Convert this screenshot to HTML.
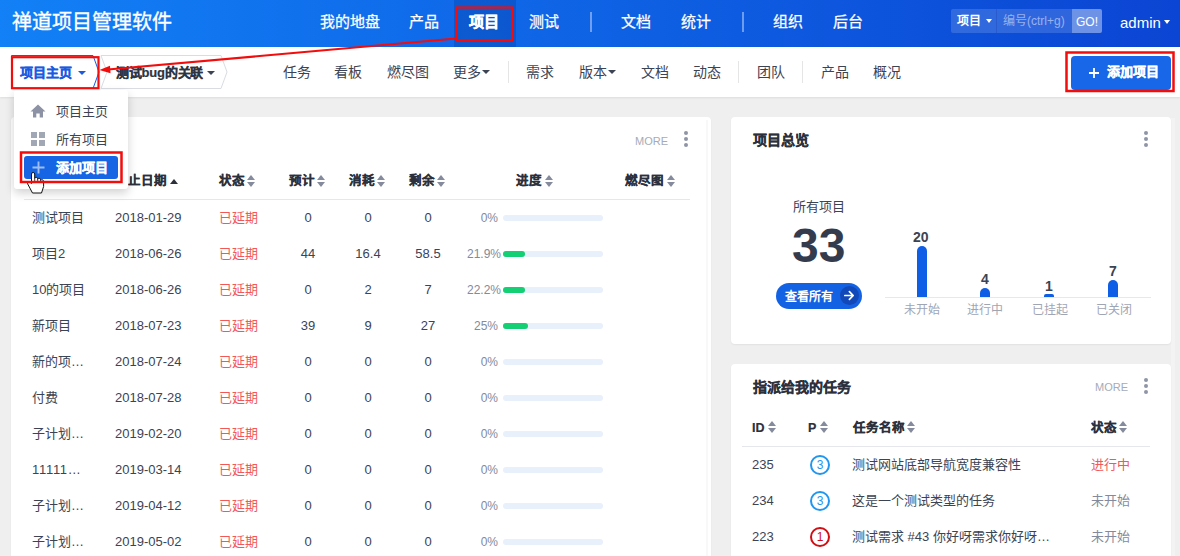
<!DOCTYPE html>
<html lang="zh-CN">
<head>
<meta charset="utf-8">
<style>
*{box-sizing:border-box;margin:0;padding:0}
html,body{width:1180px;height:556px;overflow:hidden}
body{position:relative;background:#efefef;font-family:"Liberation Sans",sans-serif;color:#3c4353;font-size:13px}
.a{position:absolute;white-space:nowrap;line-height:1}
#hd{position:absolute;left:0;top:0;width:1180px;height:47px;background:linear-gradient(to right,#1280f6,#0b45d3)}
#sub{position:absolute;left:0;top:47px;width:1180px;height:50px;background:#fff;box-shadow:0 1px 2px rgba(0,0,0,.08)}
.w{color:#fff}
.card{position:absolute;background:#fff;border-radius:4px;box-shadow:0 1px 2px rgba(0,0,0,.06)}
.b{font-weight:bold}
.nav{font-size:15px;top:14px;color:#fff;-webkit-text-stroke:0.25px #fff}
.nav.b{-webkit-text-stroke:0.5px #fff}
.sn{font-size:14px;color:#3c4353}
.sep{position:absolute;width:1px;background:#e5e5e5}
.th{font-size:12.5px;font-weight:bold;color:#2b303c;-webkit-text-stroke:0.2px #2b303c}
.sort{position:absolute;width:9px;height:12px}
.sort:before{content:"";position:absolute;left:0;top:0;border-left:4.5px solid transparent;border-right:4.5px solid transparent;border-bottom:5px solid #858b9d}
.sort:after{content:"";position:absolute;left:0;top:7px;border-left:4.5px solid transparent;border-right:4.5px solid transparent;border-top:5px solid #858b9d}
.td{font-size:13px;color:#3c4353}
.red{color:#f1585a}
.pbar{position:absolute;left:503px;width:100px;height:6px;border-radius:3px;background:#e8f0fb}
.pfill{position:absolute;left:0;top:0;height:6px;border-radius:3px;background:#14cf74}
.pct{font-size:12px;color:#838a9d}
.dots{position:absolute;width:4px;height:16px}
.dots i{position:absolute;left:0;width:4px;height:4px;border-radius:2px;background:#8f95a6}
.more{font-size:11px;color:#a6abb8}
.bar{position:absolute;width:10px;background:#0f5ee6;border-radius:5px 5px 0 0}
.bl{font-size:14px;font-weight:bold;color:#3c4353}
.cat{font-size:12px;color:#a0a5b4}
.pri{position:absolute;width:20px;height:20px;border-radius:10px;border:2px solid #2196f0;color:#2196f0;font-size:12px;line-height:16px;text-align:center}
</style>
</head>
<body>
<div id="hd">
  <div class="a w" style="left:12px;top:12px;font-size:20px;-webkit-text-stroke:0.35px #fff">禅道项目管理软件</div>
  <div style="position:absolute;left:454px;top:0;width:62px;height:47px;background:rgba(0,20,100,.18)"></div>
  <div class="a nav" style="left:320px">我的地盘</div>
  <div class="a nav" style="left:409px">产品</div>
  <div class="a nav b" style="left:469px">项目</div>
  <div class="a nav" style="left:529px">测试</div>
  <div style="position:absolute;left:589.5px;top:12px;width:2px;height:20px;background:rgba(255,255,255,.4)"></div>
  <div class="a nav" style="left:621px">文档</div>
  <div class="a nav" style="left:681px">统计</div>
  <div style="position:absolute;left:741.5px;top:12px;width:2px;height:20px;background:rgba(255,255,255,.4)"></div>
  <div class="a nav" style="left:773px">组织</div>
  <div class="a nav" style="left:833px">后台</div>
  <!-- search -->
  <div style="position:absolute;left:951px;top:9px;width:151px;height:24px;border-radius:2px;background:rgba(255,255,255,.15)"></div>
  <div style="position:absolute;left:996px;top:9px;width:1px;height:24px;background:rgba(0,0,80,.12)"></div>
  <div style="position:absolute;left:1072px;top:9px;width:30px;height:24px;border-radius:0 2px 2px 0;background:rgba(255,255,255,.3)"></div>
  <div class="a w b" style="left:957px;top:15px;font-size:12px">项目</div>
  <div style="position:absolute;left:986px;top:19px;border-left:3.5px solid transparent;border-right:3.5px solid transparent;border-top:4px solid #fff"></div>
  <div class="a" style="left:1003px;top:15px;font-size:12px;color:rgba(255,255,255,.5)">编号(ctrl+g)</div>
  <div class="a w" style="left:1076px;top:16px;font-size:12px">GO!</div>
  <div class="a w" style="left:1120px;top:15px;font-size:15px">admin</div>
  <div style="position:absolute;left:1164px;top:20px;border-left:3.5px solid transparent;border-right:3.5px solid transparent;border-top:4px solid #fff"></div>
</div>

<div id="sub">
  <!-- breadcrumb -->
  <svg style="position:absolute;left:0;top:0" width="240" height="50">
    <path d="M11.5 8.5 H93 L99 25 L93 41.5 H11.5 Z" fill="#fff" stroke="#1a5be0" stroke-width="1"/>
    <path d="M101 8.5 H221 L227 25 L221 41.5 H101 L107 25 Z" fill="#fff" stroke="#d9dce3" stroke-width="1"/>
  </svg>
  <div class="a b" style="left:20px;top:19px;font-size:13px;color:#1a5be0;-webkit-text-stroke:0.25px #1a5be0">项目主页</div>
  <div style="position:absolute;left:77.5px;top:23.5px;border-left:4px solid transparent;border-right:4px solid transparent;border-top:4.5px solid #1a5be0"></div>
  <div class="a b" style="left:116px;top:19px;font-size:13px;color:#2f3442;letter-spacing:-0.2px;-webkit-text-stroke:0.2px #2f3442">测试bug的关联</div>
  <div style="position:absolute;left:207px;top:23.5px;border-left:4px solid transparent;border-right:4px solid transparent;border-top:4.5px solid #3c4353"></div>

  <div class="a sn" style="left:283px;top:18px">任务</div>
  <div class="a sn" style="left:334px;top:18px">看板</div>
  <div class="a sn" style="left:387px;top:18px">燃尽图</div>
  <div class="a sn" style="left:453px;top:18px">更多</div>
  <div style="position:absolute;left:482px;top:23px;border-left:4px solid transparent;border-right:4px solid transparent;border-top:4.5px solid #3c4353"></div>
  <div class="sep" style="left:508px;top:14px;height:22px"></div>
  <div class="a sn" style="left:526px;top:18px">需求</div>
  <div class="a sn" style="left:579px;top:18px">版本</div>
  <div style="position:absolute;left:608px;top:23px;border-left:4px solid transparent;border-right:4px solid transparent;border-top:4.5px solid #3c4353"></div>
  <div class="a sn" style="left:641px;top:18px">文档</div>
  <div class="a sn" style="left:693px;top:18px">动态</div>
  <div class="sep" style="left:738px;top:14px;height:22px"></div>
  <div class="a sn" style="left:757px;top:18px">团队</div>
  <div class="sep" style="left:802px;top:14px;height:22px"></div>
  <div class="a sn" style="left:821px;top:18px">产品</div>
  <div class="a sn" style="left:873px;top:18px">概况</div>

  <div style="position:absolute;left:1071px;top:8.5px;width:100px;height:34px;border-radius:4px;background:#1767e8"></div>
  <svg style="position:absolute;left:1088.5px;top:20.5px" width="10" height="10" viewBox="0 0 10 10"><path d="M5 0V10M0 5H10" stroke="#fff" stroke-width="1.8"/></svg>
  <div class="a w b" style="left:1107px;top:18px;font-size:13px;-webkit-text-stroke:0.3px #fff">添加项目</div>
</div>

<!-- left card -->
<div class="card" style="left:11px;top:117px;width:700px;height:460px">
</div>
<div class="a more" style="left:635px;top:136px">MORE</div>
<div class="dots" style="left:684px;top:131px"><i style="top:0"></i><i style="top:6px"></i><i style="top:12px"></i></div>

<div class="a th" style="left:115px;top:174.5px">截止日期</div>
<div style="position:absolute;left:170px;top:178.5px;border-left:4px solid transparent;border-right:4px solid transparent;border-bottom:5px solid #2b303c"></div>
<div class="a th" style="left:219px;top:174.5px">状态</div><div class="sort" style="left:247px;top:174.5px"></div>
<div class="a th" style="left:289px;top:174.5px">预计</div><div class="sort" style="left:317px;top:174.5px"></div>
<div class="a th" style="left:349px;top:174.5px">消耗</div><div class="sort" style="left:377px;top:174.5px"></div>
<div class="a th" style="left:409px;top:174.5px">剩余</div><div class="sort" style="left:437px;top:174.5px"></div>
<div class="a th" style="left:516px;top:174.5px">进度</div><div class="sort" style="left:544.5px;top:174.5px"></div>
<div class="a th" style="left:625px;top:174.5px">燃尽图</div><div class="sort" style="left:667px;top:174.5px"></div>
<div style="position:absolute;left:24px;top:199px;width:666px;height:1px;background:#e5e7ec"></div>

<div class="a td" style="left:32px;top:211px">测试项目</div>
<div class="a td" style="left:115px;top:211px">2018-01-29</div>
<div class="a td red" style="left:219px;top:211px">已延期</div>
<div class="a td" style="left:278px;width:60px;text-align:center;top:211px">0</div>
<div class="a td" style="left:338px;width:60px;text-align:center;top:211px">0</div>
<div class="a td" style="left:398px;width:60px;text-align:center;top:211px">0</div>
<div class="a pct" style="left:448px;width:50px;text-align:right;top:212px">0%</div>
<div class="pbar" style="top:215px"></div>
<div class="a td" style="left:32px;top:247px">项目2</div>
<div class="a td" style="left:115px;top:247px">2018-06-26</div>
<div class="a td red" style="left:219px;top:247px">已延期</div>
<div class="a td" style="left:278px;width:60px;text-align:center;top:247px">44</div>
<div class="a td" style="left:338px;width:60px;text-align:center;top:247px">16.4</div>
<div class="a td" style="left:398px;width:60px;text-align:center;top:247px">58.5</div>
<div class="a pct" style="left:467px;width:34px;text-align:right;top:248px">21.9%</div>
<div class="pbar" style="top:251px"><div class="pfill" style="width:22px"></div></div>
<div class="a td" style="left:32px;top:283px">10的项目</div>
<div class="a td" style="left:115px;top:283px">2018-06-26</div>
<div class="a td red" style="left:219px;top:283px">已延期</div>
<div class="a td" style="left:278px;width:60px;text-align:center;top:283px">0</div>
<div class="a td" style="left:338px;width:60px;text-align:center;top:283px">2</div>
<div class="a td" style="left:398px;width:60px;text-align:center;top:283px">7</div>
<div class="a pct" style="left:467px;width:34px;text-align:right;top:284px">22.2%</div>
<div class="pbar" style="top:287px"><div class="pfill" style="width:22px"></div></div>
<div class="a td" style="left:32px;top:319px">新项目</div>
<div class="a td" style="left:115px;top:319px">2018-07-23</div>
<div class="a td red" style="left:219px;top:319px">已延期</div>
<div class="a td" style="left:278px;width:60px;text-align:center;top:319px">39</div>
<div class="a td" style="left:338px;width:60px;text-align:center;top:319px">9</div>
<div class="a td" style="left:398px;width:60px;text-align:center;top:319px">27</div>
<div class="a pct" style="left:448px;width:50px;text-align:right;top:320px">25%</div>
<div class="pbar" style="top:323px"><div class="pfill" style="width:25px"></div></div>
<div class="a td" style="left:32px;top:355px">新的项…</div>
<div class="a td" style="left:115px;top:355px">2018-07-24</div>
<div class="a td red" style="left:219px;top:355px">已延期</div>
<div class="a td" style="left:278px;width:60px;text-align:center;top:355px">0</div>
<div class="a td" style="left:338px;width:60px;text-align:center;top:355px">0</div>
<div class="a td" style="left:398px;width:60px;text-align:center;top:355px">0</div>
<div class="a pct" style="left:448px;width:50px;text-align:right;top:356px">0%</div>
<div class="pbar" style="top:359px"></div>
<div class="a td" style="left:32px;top:391px">付费</div>
<div class="a td" style="left:115px;top:391px">2018-07-28</div>
<div class="a td red" style="left:219px;top:391px">已延期</div>
<div class="a td" style="left:278px;width:60px;text-align:center;top:391px">0</div>
<div class="a td" style="left:338px;width:60px;text-align:center;top:391px">0</div>
<div class="a td" style="left:398px;width:60px;text-align:center;top:391px">0</div>
<div class="a pct" style="left:448px;width:50px;text-align:right;top:392px">0%</div>
<div class="pbar" style="top:395px"></div>
<div class="a td" style="left:32px;top:427px">子计划…</div>
<div class="a td" style="left:115px;top:427px">2019-02-20</div>
<div class="a td red" style="left:219px;top:427px">已延期</div>
<div class="a td" style="left:278px;width:60px;text-align:center;top:427px">0</div>
<div class="a td" style="left:338px;width:60px;text-align:center;top:427px">0</div>
<div class="a td" style="left:398px;width:60px;text-align:center;top:427px">0</div>
<div class="a pct" style="left:448px;width:50px;text-align:right;top:428px">0%</div>
<div class="pbar" style="top:431px"></div>
<div class="a td" style="left:32px;top:463px;letter-spacing:0.7px">11111…</div>
<div class="a td" style="left:115px;top:463px">2019-03-14</div>
<div class="a td red" style="left:219px;top:463px">已延期</div>
<div class="a td" style="left:278px;width:60px;text-align:center;top:463px">0</div>
<div class="a td" style="left:338px;width:60px;text-align:center;top:463px">0</div>
<div class="a td" style="left:398px;width:60px;text-align:center;top:463px">0</div>
<div class="a pct" style="left:448px;width:50px;text-align:right;top:464px">0%</div>
<div class="pbar" style="top:467px"></div>
<div class="a td" style="left:32px;top:499px">子计划…</div>
<div class="a td" style="left:115px;top:499px">2019-04-12</div>
<div class="a td red" style="left:219px;top:499px">已延期</div>
<div class="a td" style="left:278px;width:60px;text-align:center;top:499px">0</div>
<div class="a td" style="left:338px;width:60px;text-align:center;top:499px">0</div>
<div class="a td" style="left:398px;width:60px;text-align:center;top:499px">0</div>
<div class="a pct" style="left:448px;width:50px;text-align:right;top:500px">0%</div>
<div class="pbar" style="top:503px"></div>
<div class="a td" style="left:32px;top:535px">子计划…</div>
<div class="a td" style="left:115px;top:535px">2019-05-02</div>
<div class="a td red" style="left:219px;top:535px">已延期</div>
<div class="a td" style="left:278px;width:60px;text-align:center;top:535px">0</div>
<div class="a td" style="left:338px;width:60px;text-align:center;top:535px">0</div>
<div class="a td" style="left:398px;width:60px;text-align:center;top:535px">0</div>
<div class="a pct" style="left:448px;width:50px;text-align:right;top:536px">0%</div>
<div class="pbar" style="top:539px"></div>

<div style="position:absolute;left:706px;top:120px;width:2px;height:436px;background:#f8f8f8"></div>
<div style="position:absolute;left:1171px;top:118px;width:4px;height:438px;background:#f3f3f3"></div>
<!-- right card 1 -->
<div class="card" style="left:731px;top:117px;width:440px;height:227px"></div>
<div class="a b" style="left:753px;top:133px;font-size:14px;color:#2b303c;-webkit-text-stroke:0.2px #2b303c">项目总览</div>
<div class="dots" style="left:1144px;top:131px"><i style="top:0"></i><i style="top:6px"></i><i style="top:12px"></i></div>
<div class="a" style="left:793px;top:200px;font-size:13px;color:#3c4353">所有项目</div>
<div class="a b" style="left:792px;top:222px;font-size:48px;color:#343b4d">33</div>
<div style="position:absolute;left:776px;top:283px;width:86px;height:26px;border-radius:13px;background:#1462e4"></div>
<div class="a w b" style="left:785px;top:291px;font-size:12px">查看所有</div>
<div style="position:absolute;left:839.5px;top:286px;width:19px;height:19px;border-radius:10px;background:#1249b8"></div>
<svg style="position:absolute;left:843px;top:289px" width="13" height="13" viewBox="0 0 13 13"><path d="M1.8 6.5H10.2M6.4 2.6L10.2 6.5L6.4 10.4" fill="none" stroke="#fff" stroke-width="1.7" stroke-linecap="round" stroke-linejoin="round"/></svg>

<div style="position:absolute;left:885px;top:297px;width:266px;height:1px;background:#e8e8e8"></div>
<div class="bar" style="left:917px;top:246px;height:51px"></div>
<div class="bar" style="left:980px;top:288px;height:9px"></div>
<div class="bar" style="left:1044px;top:294px;height:3px;border-radius:2px 2px 0 0"></div>
<div class="bar" style="left:1108px;top:280px;height:17px"></div>
<div class="a bl" style="left:913px;top:230px">20</div>
<div class="a bl" style="left:981px;top:272px">4</div>
<div class="a bl" style="left:1045px;top:279px">1</div>
<div class="a bl" style="left:1109px;top:264px">7</div>
<div class="a cat" style="left:904px;top:304px">未开始</div>
<div class="a cat" style="left:967px;top:304px">进行中</div>
<div class="a cat" style="left:1032px;top:304px">已挂起</div>
<div class="a cat" style="left:1096px;top:304px">已关闭</div>

<!-- right card 2 -->
<div class="card" style="left:731px;top:364px;width:440px;height:220px"></div>
<div class="a b" style="left:753px;top:380px;font-size:14px;color:#2b303c;-webkit-text-stroke:0.2px #2b303c">指派给我的任务</div>
<div class="a more" style="left:1095px;top:382px">MORE</div>
<div class="dots" style="left:1144px;top:378px"><i style="top:0"></i><i style="top:6px"></i><i style="top:12px"></i></div>
<div class="a th" style="left:752px;top:421.5px">ID</div><div class="sort" style="left:768px;top:421px"></div>
<div class="a th" style="left:808px;top:421.5px">P</div><div class="sort" style="left:820px;top:421px"></div>
<div class="a th" style="left:853px;top:421.5px">任务名称</div><div class="sort" style="left:906.5px;top:421px"></div>
<div class="a th" style="left:1091px;top:421.5px">状态</div><div class="sort" style="left:1119px;top:421px"></div>
<div style="position:absolute;left:742px;top:446px;width:408px;height:1px;background:#e5e7ec"></div>

<div class="a td" style="left:752px;top:458px">235</div>
<div class="pri" style="left:810px;top:455px">3</div>
<div class="a td" style="left:852px;top:458px">测试网站底部导航宽度兼容性</div>
<div class="a td red" style="left:1091px;top:458px">进行中</div>
<div class="a td" style="left:752px;top:494px">234</div>
<div class="pri" style="left:810px;top:491px">3</div>
<div class="a td" style="left:852px;top:494px">这是一个测试类型的任务</div>
<div class="a td" style="left:1091px;top:494px;color:#838a9d">未开始</div>
<div class="a td" style="left:752px;top:530px">223</div>
<div class="pri" style="left:810px;top:527px;border-color:#d40d12;color:#d40d12">1</div>
<div class="a td" style="left:852px;top:530px">测试需求 #43 你好呀需求你好呀…</div>
<div class="a td" style="left:1091px;top:530px;color:#838a9d">未开始</div>

<!-- dropdown -->
<div style="position:absolute;left:13.5px;top:90px;width:114px;height:99px;background:#fff;border-radius:3px;box-shadow:0 4px 10px rgba(0,0,0,.18)"></div>
<svg style="position:absolute;left:30px;top:104px" width="16" height="14" viewBox="0 0 16 14"><path d="M8 0.5 L15.5 7.5 H13 V13.5 H9.7 V9.5 H6.3 V13.5 H3 V7.5 H0.5 Z" fill="#8d93a5"/></svg>
<div class="a" style="left:56px;top:105px;font-size:13px;color:#3c4353">项目主页</div>
<svg style="position:absolute;left:31px;top:132px" width="14" height="14" viewBox="0 0 14 14"><rect x="0" y="0" width="6" height="6" fill="#a2a7b5"/><rect x="8" y="0" width="6" height="6" fill="#a2a7b5"/><rect x="0" y="8" width="6" height="6" fill="#a2a7b5"/><rect x="8" y="8" width="6" height="6" fill="#a2a7b5"/></svg>
<div class="a" style="left:56px;top:133px;font-size:13px;color:#3c4353">所有项目</div>
<div style="position:absolute;left:24px;top:156px;width:94px;height:23px;background:#1565e5;border-radius:3px"></div>
<svg style="position:absolute;left:32px;top:161px" width="13" height="13" viewBox="0 0 13 13"><path d="M6.5 0.5V12.5M0.5 6.5H12.5" stroke="#9fbdf2" stroke-width="1.9"/></svg>
<div class="a w b" style="left:56px;top:161px;font-size:13px;-webkit-text-stroke:0.3px #fff">添加项目</div>

<!-- annotations -->
<svg style="position:absolute;left:0;top:0" width="1180" height="556">
  <path d="M31.5 183.5 V174 Q31.5 172.5 33.1 172.5 Q34.7 172.5 34.7 174 V178.5 Q35.2 177.3 36.2 177.3 Q37.6 177.3 37.7 178.8 V179.2 Q38.3 178.3 39.2 178.3 Q40.6 178.4 40.6 179.8 V180.2 Q41.3 179.6 42.1 179.7 Q43.6 179.9 43.6 181.5 V186.5 L41.5 193 H32.5 L27.6 183.8 Q27 182.2 28.3 181.8 Q29.7 181.5 31.5 183.5 Z" fill="#fff" stroke="#111" stroke-width="1"/><path d="M34.7 178.5 V181.8 M37.7 179 V182.2 M40.6 180 V182.6" stroke="#111" stroke-width="0.8" fill="none"/>
  <rect x="456.5" y="7.5" width="56" height="33" fill="none" stroke="#f20c0c" stroke-width="2.2"/>
  <rect x="12" y="57.2" width="86.5" height="31" fill="none" stroke="#f20c0c" stroke-width="2.2"/>
  <rect x="1066.5" y="52.5" width="107" height="38.5" fill="none" stroke="#f20c0c" stroke-width="2.5"/>
  <rect x="21" y="152.5" width="100.5" height="29.5" fill="none" stroke="#f20c0c" stroke-width="2.5"/>
  <line x1="456" y1="38.5" x2="108" y2="69.6" stroke="#f20c0c" stroke-width="2"/>
  <path d="M99.4 70.1 L110 65.8 L110.5 73.3 Z" fill="#f20c0c"/>
  
</svg>
</body>
</html>
